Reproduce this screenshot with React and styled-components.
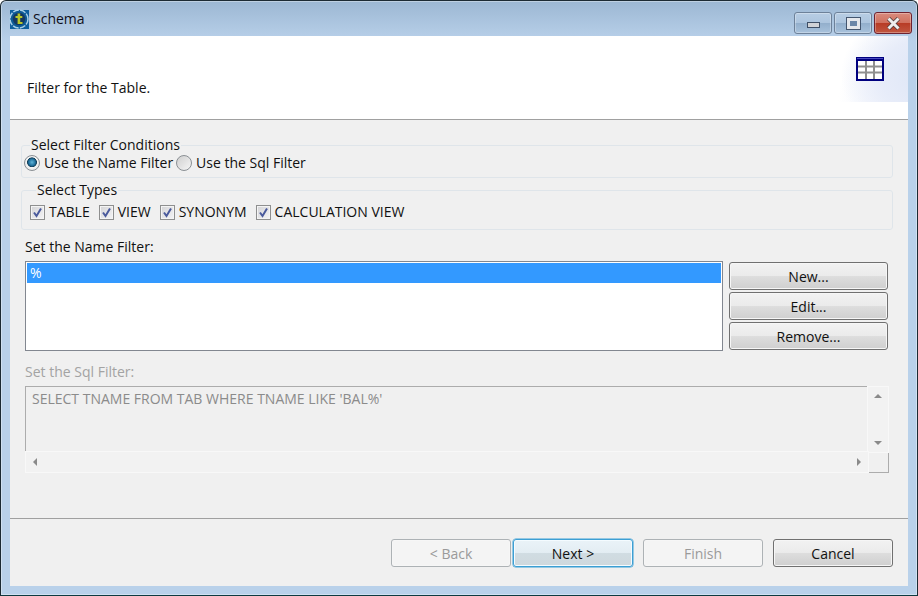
import React from "react";
import styled, { createGlobalStyle } from "styled-components";

const GlobalStyle = createGlobalStyle`
  html, body {
    margin: 0;
    padding: 0;
    background: #fff;
  }
  * {
    box-sizing: border-box;
  }
`;

const Window = styled.div`
  width: 918px;
  height: 596px;
  display: flex;
  flex-direction: column;
  padding: 0 9px 9px;
  background: linear-gradient(180deg, #9cb7d3 0, #b9d1ea 40px, #b9d1ea 100%);
  border: 1px solid #1c2a33;
  border-bottom-color: #0d3a40;
  border-radius: 6px 6px 0 0;
  box-shadow: inset 0 0 0 1px rgba(255, 255, 255, 0.35);
  font-family: "Open Sans", "Noto Sans", sans-serif;
  font-size: 14px;
  color: #111;
  overflow: hidden;
`;

const TitleBar = styled.div`
  height: 35px;
  flex: none;
  display: flex;
  align-items: center;
  margin: 0 -1px;
`;

const TitleText = styled.span`
  margin-left: 4px;
  color: #0e0e1a;
  font-size: 14px;
  line-height: 20px;
`;

const WindowControls = styled.div`
  margin-left: auto;
  display: flex;
  gap: 2px;
  align-self: flex-start;
  margin-top: 11px;
  margin-right: -3px;
`;

const ControlButton = styled.div`
  width: ${(p) => p.$width}px;
  height: 22px;
  display: flex;
  align-items: center;
  justify-content: center;
  border-radius: 3px;
  border: 1px solid ${(p) => (p.$close ? "#6e2230" : "#6d8199")};
  box-shadow: inset 0 0 0 1px rgba(255, 255, 255, 0.3);
  background: ${(p) =>
    p.$close
      ? "linear-gradient(180deg, #d98b7e 0, #d0715f 48%, #b83c26 52%, #c05640 100%)"
      : "linear-gradient(180deg, #b7cde4 0, #adc5de 48%, #93afcc 52%, #a8c2dc 100%)"};
`;

const MinimizeGlyph = styled.div`
  width: 13px;
  height: 6px;
  margin-top: 4px;
  background: #d0d2d6;
  border: 1px solid #3f4f66;
`;

const MaximizeGlyph = styled.div`
  width: 13px;
  height: 11px;
  background: #6a86a8;
  border: 3px solid #e4e7ec;
  outline: 1px solid #44566f;
`;

const Content = styled.div`
  flex: 1;
  display: flex;
  flex-direction: column;
  background: #f0f0f0;
  min-height: 0;
`;

const Banner = styled.div`
  height: 84px;
  flex: none;
  position: relative;
  display: flex;
  align-items: flex-end;
  padding: 0 0 21px 17px;
  background: #fff;
  border-bottom: 1px solid #a0a0a0;
`;

const BannerArt = styled.div`
  position: absolute;
  top: 0;
  right: 0;
  width: 76px;
  height: 66px;
  background:
    radial-gradient(ellipse 90px 70px at 130% 60%, #dde5f6 0, #e7ecf9 55%, rgba(255, 255, 255, 0) 100%),
    radial-gradient(ellipse 70px 80px at 100% 100%, #edf1fb 0, rgba(255, 255, 255, 0) 100%);
`;

const BannerIcon = styled.svg`
  position: absolute;
  top: 21px;
  right: 24px;
`;

const BannerText = styled.span`
  line-height: 20px;
`;

const Body = styled.div`
  flex: 1;
  display: flex;
  flex-direction: column;
  padding: 16px 15px 0 11px;
  min-height: 0;
`;

const Group = styled.fieldset`
  margin: 0 0 ${(p) => p.$gap}px;
  padding: ${(p) => p.$pad};
  height: ${(p) => p.$height}px;
  border: 1px solid #dfe5ea;
  border-radius: 3px;
  min-width: 0;
`;

const GroupTitle = styled.legend`
  padding: 0 1px;
  margin-left: 6px;
  line-height: 18px;
  font-size: 14px;
`;

const OptionRow = styled.div`
  display: flex;
  align-items: center;
  gap: ${(p) => p.$gap}px;
`;

const Option = styled.label`
  display: flex;
  align-items: center;
  gap: ${(p) => p.$gap}px;
  line-height: 18px;
  white-space: nowrap;
`;

const RadioMark = styled.span`
  width: 16px;
  height: 16px;
  flex: none;
  border-radius: 50%;
  border: 1px solid #8a8f94;
  background: ${(p) =>
    p.$on
      ? "radial-gradient(circle at 50% 45%, #5fb4d8 0, #1f6f9c 32%, #123e58 44%, #f4f4f4 50%, #dcdcdc 100%)"
      : "linear-gradient(135deg, #cfcfcf, #f6f6f6)"};
`;

const CheckMark = styled.span`
  width: 15px;
  height: 15px;
  flex: none;
  display: flex;
  align-items: center;
  justify-content: center;
  border: 1px solid #8e8f8f;
  background: linear-gradient(135deg, #d4d4d6, #f4f4f6);
  box-shadow: inset 0 0 0 1px #f4f4f4;
`;

const FieldLabel = styled.div`
  line-height: 18px;
  margin-left: 4px;
  color: ${(p) => (p.$disabled ? "#a3a3a3" : "#111")};
`;

const FilterRow = styled.div`
  display: flex;
  gap: 6px;
  margin: 5px 5px 0 4px;
`;

const FilterList = styled.div`
  width: 698px;
  height: 90px;
  background: #fff;
  border: 1px solid #828790;
  padding: 1px;
`;

const FilterItem = styled.div`
  height: 20px;
  padding-left: 3px;
  line-height: 20px;
  color: #fff;
  background: #3399ff;
`;

const SideButtons = styled.div`
  flex: 1;
  display: flex;
  flex-direction: column;
  gap: 2px;
  padding-top: 1px;
`;

const Button = styled.button`
  font: inherit;
  font-size: 14px;
  padding: 0;
  height: 28px;
  width: ${(p) => (p.$wide ? "100%" : "120px")};
  flex: none;
  color: ${(p) => (p.disabled ? "#9a9a9a" : "#111")};
  border-radius: 3px;
  border: 1px solid ${(p) => (p.disabled ? "#adb2b5" : p.$focus ? "#3c9fd4" : "#707070")};
  background: ${(p) =>
    p.disabled
      ? "#f4f4f4"
      : p.$focus
      ? "linear-gradient(180deg, #eaf3f8 0, #e3edf3 48%, #d0dce2 52%, #cfd8dd 100%)"
      : "linear-gradient(180deg, #f2f2f2 0, #ebebeb 48%, #dddddd 52%, #cfcfcf 100%)"};
  box-shadow: ${(p) => (p.$focus ? "0 0 0 0.5px #3c9fd4, inset 0 0 0 1px #f4fbff" : "inset 0 0 0 1px #f6f6f6")};
`;

const SqlBox = styled.div`
  height: 87px;
  margin: 5px 4px 0 4px;
  border: 1px solid #acacac;
  display: grid;
  grid-template-columns: 1fr 20px;
  grid-template-rows: 1fr 20px;
  color: #8b8b8b;
  background: #f0f0f0;
`;

const SqlText = styled.div`
  padding: 3px 6px;
  line-height: 18px;
`;

const ScrollTrack = styled.div`
  display: flex;
  flex-direction: ${(p) => (p.$vertical ? "column" : "row")};
  align-items: center;
  justify-content: space-between;
  padding: ${(p) => (p.$vertical ? "7px 0" : "0 7px 0 7px")};
  background: #f2f2f2;
  box-shadow: 0 0 0 1px #f8f8f8;
`;

const Arrow = styled.i`
  width: 0;
  height: 0;
  display: block;
  border: 4px solid transparent;
  border-bottom-color: ${(p) => (p.$dir === "up" ? "#8a8a8a" : "transparent")};
  border-top-color: ${(p) => (p.$dir === "down" ? "#8a8a8a" : "transparent")};
  border-left-color: ${(p) => (p.$dir === "right" ? "#8a8a8a" : "transparent")};
  border-right-color: ${(p) => (p.$dir === "left" ? "#8a8a8a" : "transparent")};
  margin: ${(p) =>
    p.$dir === "up"
      ? "-4px 0 0"
      : p.$dir === "down"
      ? "0 0 -4px"
      : p.$dir === "left"
      ? "0 0 0 -4px"
      : "0 -4px 0 0"};
`;

const Footer = styled.div`
  margin-top: auto;
  height: 68px;
  flex: none;
  display: flex;
  align-items: flex-start;
  justify-content: flex-end;
  padding: 20px 15px 0 0;
  border-top: 1px solid #a0a0a0;
`;

const NavGroup = styled.div`
  display: flex;
  gap: 2px;
  margin-right: 10px;
`;

const FinishGroup = styled.div`
  display: flex;
  gap: 10px;
`;

const Logo = () => (
  <svg width="20" height="20" viewBox="0 0 20 20">
    <rect x="1" y="1" width="19" height="19" fill="#0f5f9e" />
    <circle cx="10" cy="10" r="9" fill="#0d5a96" stroke="#a9cfe6" strokeWidth="1.5" strokeDasharray="6 1.2" />
    <circle cx="10" cy="10" r="6.2" fill="#15385f" />
    <rect x="8.6" y="4.5" width="2.6" height="10.5" fill="#b7c72a" />
    <rect x="6.5" y="7" width="6.8" height="2" fill="#b7c72a" />
    <rect x="9" y="13" width="4.5" height="2" fill="#b7c72a" />
  </svg>
);

const TableIcon = () => (
  <BannerIcon width="28" height="24" viewBox="0 0 28 24">
    <rect width="28" height="24" fill="#00007f" />
    <rect x="1" y="1" width="26" height="1" fill="#4a4ac0" />
    <rect x="2" y="4" width="24" height="18" fill="#fff" />
    <path d="M2 9.5H26M2 15.5H26M10 4V22M18 4V22" stroke="#8f8f8f" strokeWidth="2" fill="none" />
  </BannerIcon>
);

const Check = () => (
  <svg width="11" height="11" viewBox="0 0 11 11">
    <path d="M2 5.5 L4.5 9 L9 1.5" stroke="#4a5a9c" strokeWidth="2" fill="none" />
  </svg>
);

const App = () => {
  const types = [
    { name: "TABLE" },
    { name: "VIEW" },
    { name: "SYNONYM" },
    { name: "CALCULATION VIEW" },
  ];

  return (
    <>
      <GlobalStyle />
      <Window>
        <TitleBar>
          <Logo />
          <TitleText>Schema</TitleText>
          <WindowControls>
            <ControlButton $width={38}>
              <MinimizeGlyph />
            </ControlButton>
            <ControlButton $width={38}>
              <MaximizeGlyph />
            </ControlButton>
            <ControlButton $width={38} $close>
              <svg width="15" height="13" viewBox="0 0 15 13">
                <path d="M2.5 1.5 L12.5 11.5 M12.5 1.5 L2.5 11.5" stroke="#4b3a3a" strokeWidth="4.4" />
                <path d="M2.5 1.5 L12.5 11.5 M12.5 1.5 L2.5 11.5" stroke="#eee" strokeWidth="3" />
              </svg>
            </ControlButton>
          </WindowControls>
        </TitleBar>
        <Content>
          <Banner>
            <BannerArt />
            <TableIcon />
            <BannerText>Filter for the Table.</BannerText>
          </Banner>
          <Body>
            <Group $height={42} $gap={3} $pad="0 0 0 2px">
              <GroupTitle>Select Filter Conditions</GroupTitle>
              <OptionRow $gap={3}>
                <Option $gap={4}>
                  <RadioMark $on />
                  Use the Name Filter
                </Option>
                <Option $gap={4}>
                  <RadioMark />
                  Use the Sql Filter
                </Option>
              </OptionRow>
            </Group>
            <Group $height={49} $gap={8} $pad="4px 0 0 8px">
              <GroupTitle>Select Types</GroupTitle>
              <OptionRow $gap={9}>
                {types.map((t) => (
                  <Option key={t.name} $gap={4}>
                    <CheckMark>
                      <Check />
                    </CheckMark>
                    {t.name}
                  </Option>
                ))}
              </OptionRow>
            </Group>
            <FieldLabel>Set the Name Filter:</FieldLabel>
            <FilterRow>
              <FilterList>
                <FilterItem>%</FilterItem>
              </FilterList>
              <SideButtons>
                <Button $wide>New...</Button>
                <Button $wide>Edit...</Button>
                <Button $wide>Remove...</Button>
              </SideButtons>
            </FilterRow>
            <FieldLabel $disabled style={{ marginTop: 12 }}>
              Set the Sql Filter:
            </FieldLabel>
            <SqlBox>
              <SqlText>SELECT TNAME FROM TAB WHERE TNAME LIKE 'BAL%'</SqlText>
              <ScrollTrack $vertical>
                <Arrow $dir="up" />
                <Arrow $dir="down" />
              </ScrollTrack>
              <ScrollTrack>
                <Arrow $dir="left" />
                <Arrow $dir="right" />
              </ScrollTrack>
            </SqlBox>
          </Body>
          <Footer>
            <NavGroup>
              <Button disabled>&lt; Back</Button>
              <Button $focus>Next &gt;</Button>
            </NavGroup>
            <FinishGroup>
              <Button disabled>Finish</Button>
              <Button>Cancel</Button>
            </FinishGroup>
          </Footer>
        </Content>
      </Window>
    </>
  );
};

export default App;
